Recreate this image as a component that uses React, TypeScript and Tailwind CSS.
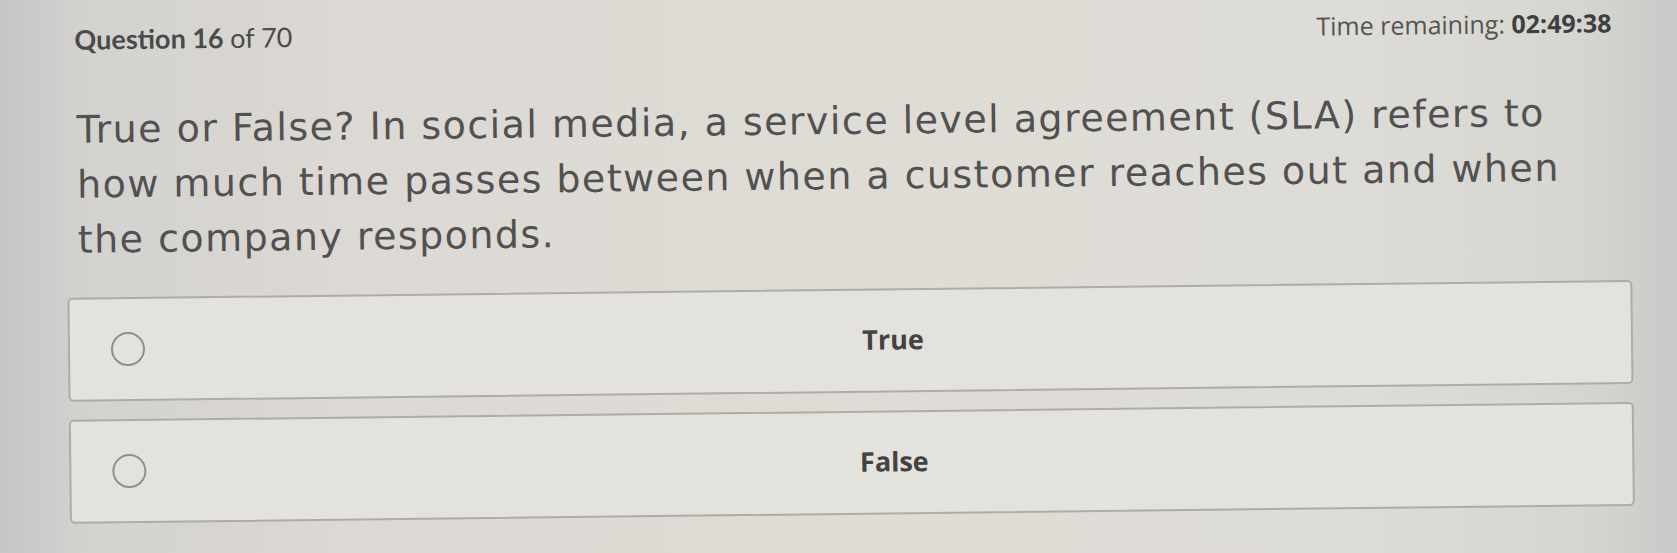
import { useState } from "react";

type Choice = { id: string; label: string };

const CHOICES: Choice[] = [
  { id: "true", label: "True" },
  { id: "false", label: "False" },
];

function ChoiceRow({
  choice,
  selected,
  onSelect,
}: {
  choice: Choice;
  selected: boolean;
  onSelect: () => void;
}) {
  return (
    <button
      type="button"
      onClick={onSelect}
      className="flex h-[104px] w-full items-center rounded-[5px] border-2 border-[#aeaca8] bg-[#e3e2dd] pl-[41px] text-left"
    >
      <span className="flex h-[34px] w-[34px] shrink-0 items-center justify-center rounded-full border-2 border-[#8f8f8d]">
        {selected && <span className="h-[17px] w-[17px] rounded-full bg-[#555]" />}
      </span>
      <span className="ml-[10px] flex-1 text-center font-['Open_Sans',sans-serif] text-[27px] font-bold text-[#424242]">
        {choice.label}
      </span>
    </button>
  );
}

export default function App() {
  const [answer, setAnswer] = useState<string | null>(null);

  return (
    <div className="h-[553px] w-full overflow-hidden bg-[linear-gradient(90deg,#c5c6c6_0%,#d3d2cf_5%,#dcd8d3_20%,#dfdcd6_50%,#dedcd6_80%,#d6d6d1_94%,#c9cac8_100%)]">
      <div className="-rotate-[0.65deg] pl-[67px] pr-[45px]">
        {/* Header */}
        <div className="flex items-baseline justify-between pt-[11px] pl-[10px] pr-[18px]">
          <div className="font-['Lato',sans-serif] text-[27px] font-bold text-[#4b4a4a]">
            Question 16 <span className="font-normal">of 70</span>
          </div>
          <div className="font-['Open_Sans',sans-serif] text-[25px] text-[#555453]">
            Time remaining: <span className="font-bold text-[#3f3f3f]">02:49:38</span>
          </div>
        </div>

        {/* Prompt */}
        <p className="mt-[42px] pl-[11px] pr-[50px] font-['DejaVu_Sans',sans-serif] text-[38px] leading-[55px] tracking-[1.45px] text-[#525151]">
          True or False? In social media, a service level agreement (SLA) refers to how much time passes between when a
          customer reaches out and when the company responds.
        </p>

        {/* Choices */}
        <div className="mt-[30px] flex flex-col gap-[18px]">
          {CHOICES.map((c) => (
            <ChoiceRow
              key={c.id}
              choice={c}
              selected={answer === c.id}
              onSelect={() => setAnswer(c.id)}
            />
          ))}
        </div>
      </div>
    </div>
  );
}
